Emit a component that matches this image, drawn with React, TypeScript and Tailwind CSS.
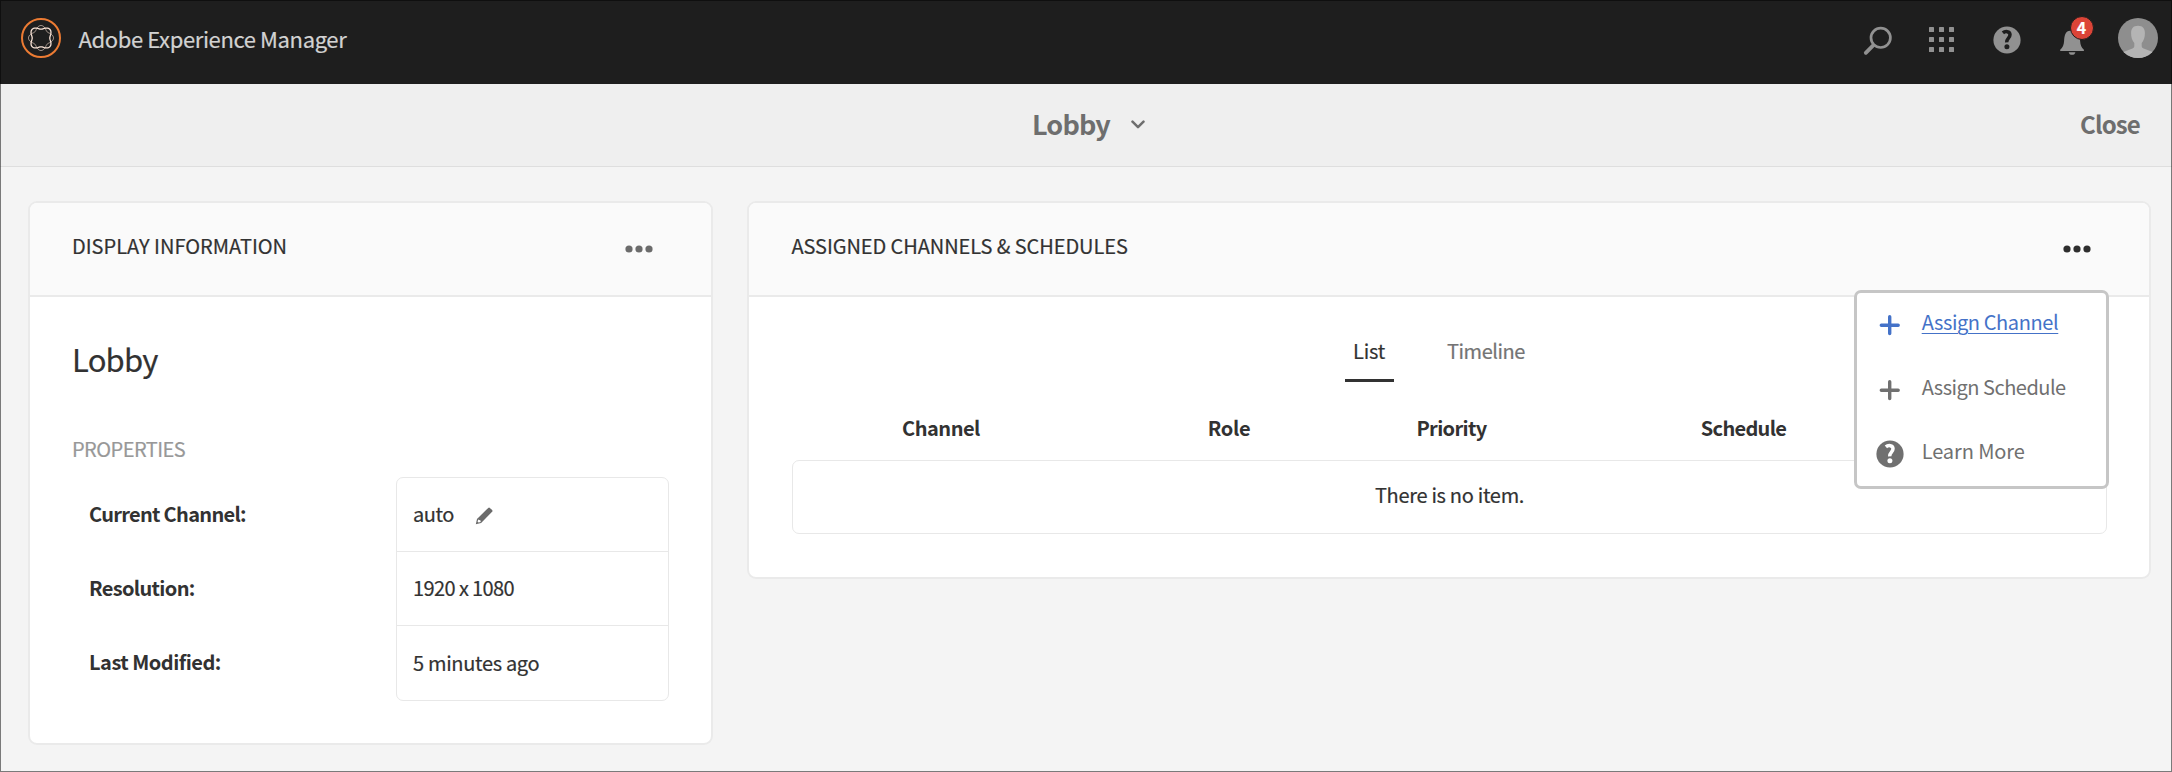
import type { ReactNode } from "react";

/* Closed rosette whose radius swings four times around the centre. */
function rosette(swing: number): string {
  const points: string[] = [];
  for (let i = 0; i < 96; i++) {
    const a = (i / 96) * Math.PI * 2;
    const r = 10.6 + swing * Math.cos(4 * a);
    points.push(`${(20 + r * Math.cos(a)).toFixed(2)} ${(20 + r * Math.sin(a)).toFixed(2)}`);
  }
  return `M${points.join("L")}Z`;
}

function Logo() {
  return (
    <svg className="size-10 shrink-0" viewBox="0 0 40 40" fill="none">
      <circle cx="20" cy="20" r="19" stroke="#ec7b33" strokeWidth="2" />
      <path d={rosette(1.9)} stroke="#b3a297" strokeWidth="1" />
      <path d={rosette(-1.8)} stroke="#f8e2d5" strokeWidth="1.3" />
    </svg>
  );
}

function SearchIcon() {
  return (
    <svg className="size-10" viewBox="0 0 40 40" fill="none" stroke="#919191" strokeLinecap="round">
      <circle cx="23.7" cy="19.8" r="9.7" strokeWidth="2.7" />
      <path d="M16.2 27.3L8.8 34.8" strokeWidth="3.8" />
    </svg>
  );
}

function GridIcon() {
  return (
    <svg className="size-10" viewBox="0 0 40 40" fill="#919191">
      {[9, 19, 29].map((y) => [7, 17, 27].map((x) => <rect key={`${x}-${y}`} x={x} y={y} width="5" height="5" rx="0.6" />))}
    </svg>
  );
}

function HelpMark({ mark }: { mark: string }) {
  return (
    <>
      <circle cx="14" cy="14" r="13.6" fill="currentColor" />
      <path d="M9.9 6.9C12 5 17 4.9 17 8.8C17 12 13.5 12.4 13.7 16.4" stroke={mark} strokeWidth="3.5" fill="none" />
      <circle cx="13.9" cy="20.7" r="2.5" fill={mark} />
    </>
  );
}

function BellIcon() {
  return (
    <svg className="size-10" viewBox="0 0 40 40" fill="#919191">
      <path d="M8.2 33v-1.3c2.6-1.9 3.6-4.6 3.9-8.6.3-5.6 1.5-10.3 6-10.3h4c4.5 0 5.7 4.7 6 10.3.3 4 1.2 6.7 3.8 8.6V33z" />
      <path d="M16.7 34.2h6.7a3.4 3.1 0 0 1-6.7 0z" />
    </svg>
  );
}

function Avatar() {
  return (
    <svg className="size-10" viewBox="0 0 40 40">
      <clipPath id="avatar"><circle cx="20" cy="20" r="20" /></clipPath>
      <g clipPath="url(#avatar)">
        <rect width="40" height="40" fill="#8e8e8e" />
        <path fill="#b4b4b4" d="M20 7.7c4.8 0 7 2.9 6.9 7.6 0 4.2-1.1 7.3-3.2 9.7v3c0 1.3.6 2 1.9 2.6L40 36v6H0v-6l14.5-5.4c1.2-.6 1.8-1.3 1.8-2.6v-3c-2.1-2.4-3.2-5.5-3.2-9.700C13 10.600 15.200 7.700 20 7.700z" />
      </g>
    </svg>
  );
}

function Dots({ className }: { className: string }) {
  return (
    <svg className={className} viewBox="0 0 28 8" width="28" height="8" fill="currentColor">
      <circle cx="4" cy="4" r="3.6" />
      <circle cx="14" cy="4" r="3.6" />
      <circle cx="24" cy="4" r="3.6" />
    </svg>
  );
}

function Plus() {
  return (
    <svg className="size-7" viewBox="0 0 28 28" stroke="currentColor" strokeWidth="3.4" strokeLinecap="round">
      <path d="M13.7 5.7v16.9M5.300 14.200h16.900" />
    </svg>
  );
}

function Pencil() {
  return (
    <svg className="mt-1 ml-[21px] size-[18px]" viewBox="0 0 18 18">
      <path fill="#6b6b6b" fillRule="evenodd" d="M.8 17.2L2 11.9 13.2.9a1.2 1.2 0 0 1 1.7 0l2.2 2.2a1.2 1.2 0 0 1 0 1.7L6.1 16zM3.2 12.4L2.6 14.7l1 .9 2.1-.5-.3-1.8-1.3-.2z" />
    </svg>
  );
}

function Card({ title, width, height, dots, children }: { title: ReactNode; width: string; height: string; dots: string; children: ReactNode }) {
  return (
    <section className={`relative shrink-0 rounded-[9px] border-2 border-[#eaeaea] bg-white ${width} ${height}`}>
      <header className="flex h-[94px] items-center justify-between rounded-t-[7px] border-b-2 border-[#eaeaea] bg-[#fafafa] pr-[58px] pl-[42px]">
        <h2 className="pb-[6px]">{title}</h2>
        <Dots className={dots} />
      </header>
      {children}
    </section>
  );
}

function MenuItem({ icon, children, className }: { icon: ReactNode; children: ReactNode; className: string }) {
  return (
    <div className={`flex h-[64.5px] items-center gap-[18px] pl-[18.7px] ${className}`}>
      {icon}
      <span className="pb-[6px]">{children}</span>
    </div>
  );
}

export default function App() {
  return (
    <div className="relative h-[772px] w-full overflow-hidden bg-[#f4f4f4] font-['Noto_Sans_CJK_SC','Noto_Sans',sans-serif] text-[20px] leading-[30px] whitespace-nowrap text-[#323232] [-webkit-text-stroke:0.2px]">
      <header className="flex h-[84px] items-center bg-[#1e1e1e] pr-[14px] pb-2 pl-[21px]">
        <Logo />
        <h1 className="ml-[17.5px] flex-1 text-[22px] tracking-[-0.38px] text-[#d2d2d2]">Adobe Experience Manager</h1>
        <nav className="flex items-center gap-[25px]">
          <SearchIcon />
          <GridIcon />
          <span className="flex size-10 items-center justify-center pt-[4.6px] pl-[0.6px] text-[#919191]">
            <svg className="size-7" viewBox="0 0 28 28"><HelpMark mark="#1e1e1e" /></svg>
          </span>
          <span className="relative size-10">
            <BellIcon />
            <span className="absolute -top-[2.5px] left-[17.5px] flex size-6 items-center justify-center rounded-full border border-[#1e1e1e] bg-[#dc4437] pb-px text-[16px] leading-none font-bold text-white">4</span>
          </span>
          <span className="ml-px"><Avatar /></span>
        </nav>
      </header>

      <div className="grid h-[83px] grid-cols-[1fr_auto_1fr] items-center border-b border-[#dedede] bg-[#efefef] pb-[2px] font-bold text-[#6e6e6e] [-webkit-text-stroke:0]">
        <span />
        <div className="flex items-center gap-[21px] pl-[5px]">
          <span className="text-[27px] tracking-[-0.8px]">Lobby</span>
          <svg className="mt-px" width="14" height="9" viewBox="0 0 14 9" fill="none" stroke="currentColor" strokeWidth="2.5" strokeLinecap="round" strokeLinejoin="round">
            <path d="M1.5 1.7L7 7.2l5.5-5.5" />
          </svg>
        </div>
        <span className="justify-self-end pr-[32px] text-[24px] tracking-[-0.8px]">Close</span>
      </div>

      <main className="flex items-start gap-[34px] pt-[34px] pl-[28px]">
        <Card title="DISPLAY INFORMATION" width="w-[685px]" height="h-[544px]" dots="text-[#6b6b6b]">
          <div className="pt-[42px] pl-[42px]">
            <h3 className="text-[31px] leading-[40px] tracking-[-0.8px]">Lobby</h3>
            <h4 className="mt-[55px] tracking-[-0.55px] text-[#989898]">PROPERTIES</h4>
            <div className="mt-[13px] flex">
              <div className="grid w-[324px] grid-rows-[74px_74px_74px] items-center pl-[17px] font-bold [-webkit-text-stroke:0]">
                <span className="tracking-[-0.7px]">Current Channel:</span>
                <span className="tracking-[-0.65px]">Resolution:</span>
                <span className="tracking-[-0.5px]">Last Modified:</span>
              </div>
              <div className="h-[224px] w-[273px] rounded-[7px] border border-[#e8e8e8]">
                <div className="flex h-[74px] items-center border-b border-[#e8e8e8] pb-px pl-4 tracking-[-0.5px]">
                  auto
                  <Pencil />
                </div>
                <div className="flex h-[74px] items-center border-b border-[#e8e8e8] pb-px pl-4 tracking-[-0.6px]">1920 x 1080</div>
                <div className="flex h-[74px] items-center pb-px pl-4 tracking-[-0.32px]">5 minutes ago</div>
              </div>
            </div>
          </div>
        </Card>

        <Card title={<span className="ml-[0.5px] tracking-[-0.08px]">ASSIGNED CHANNELS &amp; SCHEDULES</span>} width="w-[1404px]" height="h-[378px]" dots="text-[#2e2e2e]">
          <div className="flex gap-[54px] pt-[39px] pl-[596px]">
            <div className="w-[49px] border-b-[3px] border-[#323232] pb-[13px] pl-[8px] tracking-[-0.2px]">List</div>
            <div className="-ml-px tracking-[-0.45px] text-[#747474]">Timeline</div>
          </div>
          <div className="mt-[31px] ml-[43px] grid grid-cols-[298px_278px_167px_417px] text-center font-bold [-webkit-text-stroke:0]">
            <span className="tracking-[-0.5px]">Channel</span>
            <span className="tracking-[-0.35px]">Role</span>
            <span className="tracking-[-0.65px]">Priority</span>
            <span className="tracking-[-0.7px]">Schedule</span>
          </div>
          <div className="mt-[17px] ml-[43px] flex h-[74px] w-[1315px] items-center justify-center rounded-[7px] border border-[#e8e8e8] pb-[4px] tracking-[-0.3px]">There is no item.</div>

          <div className="absolute top-[87px] right-[40px] h-[199px] w-[255px] rounded-[7px] border-[3px] border-[#c6c6c6] bg-white [-webkit-text-stroke:0]">
            <MenuItem icon={<Plus />} className="text-[#4472c8]">
              <span className="tracking-[-0.4px] underline decoration-1 underline-offset-[3px]">Assign Channel</span>
            </MenuItem>
            <MenuItem icon={<Plus />} className="tracking-[-0.5px] text-[#707070]">Assign Schedule</MenuItem>
            <MenuItem icon={<svg className="size-7" viewBox="0 0 28 28"><HelpMark mark="#ffffff" /></svg>} className="tracking-[-0.1px] text-[#707070]">Learn More</MenuItem>
          </div>
        </Card>
      </main>
      <div className="pointer-events-none absolute inset-0 border border-black/50" />
    </div>
  );
}
